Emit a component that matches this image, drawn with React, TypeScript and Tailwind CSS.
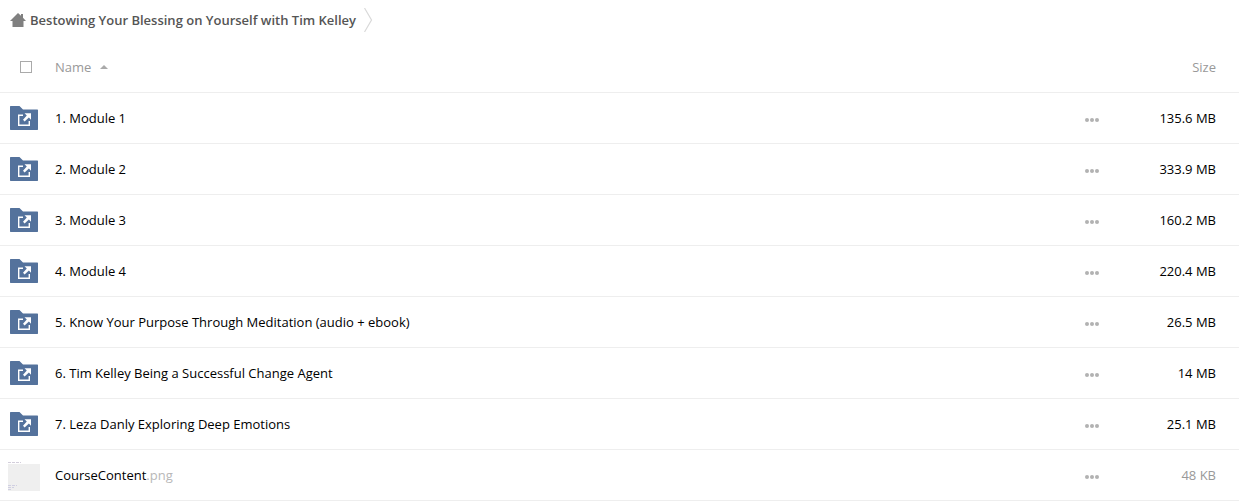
import clsx from "clsx";

type Entry = {
    name: string;
    ext?: string;
    size: string;
    kind: "folder" | "image";
};

const entries: Entry[] = [
    { name: "1. Module 1", size: "135.6 MB", kind: "folder" },
    { name: "2. Module 2", size: "333.9 MB", kind: "folder" },
    { name: "3. Module 3", size: "160.2 MB", kind: "folder" },
    { name: "4. Module 4", size: "220.4 MB", kind: "folder" },
    { name: "5. Know Your Purpose Through Meditation (audio + ebook)", size: "26.5 MB", kind: "folder" },
    { name: "6. Tim Kelley Being a Successful Change Agent", size: "14 MB", kind: "folder" },
    { name: "7. Leza Danly Exploring Deep Emotions", size: "25.1 MB", kind: "folder" },
    { name: "CourseContent", ext: ".png", size: "48 KB", kind: "image" },
];

function HomeIcon() {
    return (
        <svg width="16" height="14" viewBox="0 0 16 14" className="shrink-0" aria-hidden>
            <path d="M8 0 L11 2.8 V1 H13 V4.7 L16 8 H13.5 V14 H2.5 V8 H0 Z" fill="#808080" />
        </svg>
    );
}

function Chevron() {
    return (
        <svg width="9" height="24" viewBox="0 0 9 24" className="shrink-0" aria-hidden>
            <path d="M0.5 0 L7.5 12 L0.5 24" fill="none" stroke="#d9d9d9" strokeWidth="1.2" />
        </svg>
    );
}

function SharedFolderIcon() {
    return (
        <svg width="28" height="24" viewBox="0 0 28 24" aria-hidden>
            <path d="M0.5 0 H9.5 L13 3.5 H27.5 L28 4 V23.5 L27.5 24 H0.5 L0 23.5 V0.5 Z" fill="#54729c" />
            <path d="M13 9.2 H8.7 V19.3 H19.3 V15" fill="none" stroke="#fff" strokeWidth="1.4" />
            <path d="M14.5 7.2 H21 V13.7 L18.9 11.6 L14.6 15.4 L13 13.8 L16.8 9.5 Z" fill="#fff" />
        </svg>
    );
}

function Thumbnail() {
    return (
        <svg width="32" height="32" viewBox="0 0 32 32" aria-hidden>
            <path d="M0 5 H32 V32 H0 Z" fill="#efefef" />
            <path d="M0 3.5 H13" stroke="#d3cedb" strokeDasharray="3 1" />
            <path d="M0 26.5 H9 M0 28.5 H6 M0 30.5 H4" stroke="#d0cfe2" strokeDasharray="3 1" />
        </svg>
    );
}

function Dots() {
    return (
        <svg width="14" height="4" viewBox="0 0 14 4" aria-hidden>
            <circle cx="2" cy="2" r="2" fill="#b2b2b2" />
            <circle cx="7" cy="2" r="2" fill="#b2b2b2" />
            <circle cx="12" cy="2" r="2" fill="#b2b2b2" />
        </svg>
    );
}

function FileRow({ entry }: { entry: Entry }) {
    const isFolder = entry.kind === "folder";
    return (
        <tr className="h-[51px] border-b border-[#eee]">
            <td className={clsx("w-[55px]", isFolder ? "pl-[10px]" : "pl-2")}>
                <div className="flex">{isFolder ? <SharedFolderIcon /> : <Thumbnail />}</div>
            </td>
            <td>
                <a href="#" className="text-black">
                    {entry.name}
                    {entry.ext && <span className="text-[#b8b8b8]">{entry.ext}</span>}
                </a>
            </td>
            <td className="w-8">
                <button type="button" aria-label={`Actions for ${entry.name}`} className="flex pt-1">
                    <Dots />
                </button>
            </td>
            <td className={clsx("w-[122px] pr-[23px] text-right", isFolder ? "text-black" : "text-[#999]")}>
                {entry.size}
            </td>
        </tr>
    );
}

export default function App() {
    return (
        <main className="bg-white font-['Open_Sans',sans-serif] text-[13px] leading-5">
            <nav aria-label="Breadcrumb" className="flex h-[41px] items-center pb-px pl-[10px]">
                <a href="#" className="flex items-center gap-1 font-semibold text-[#555]">
                    <HomeIcon />
                    Bestowing Your Blessing on Yourself with Tim Kelley
                </a>
                <span className="ml-2">
                    <Chevron />
                </span>
            </nav>
            <table className="w-full table-fixed border-collapse">
                <thead>
                    <tr className="h-[51px] border-b border-[#eee] text-[#999]">
                        <th className="w-[55px] pt-0.5 pl-5">
                            <input
                                type="checkbox"
                                aria-label="Select all"
                                className="block size-3 appearance-none border border-[#aaa] bg-white checked:bg-[#54729c]"
                            />
                        </th>
                        <th className="pt-0.5 text-left font-normal">
                            <button type="button" className="flex items-center gap-[9px]">
                                Name
                                <svg width="8" height="4" viewBox="0 0 8 4" aria-hidden>
                                    <path d="M0 4 L4 0 L8 4 Z" fill="#aaa" />
                                </svg>
                            </button>
                        </th>
                        <th className="w-8" aria-label="Actions" />
                        <th className="w-[122px] pt-0.5 pr-[23px] text-right font-normal">Size</th>
                    </tr>
                </thead>
                <tbody>
                    {entries.map((entry) => (
                        <FileRow key={entry.name} entry={entry} />
                    ))}
                </tbody>
            </table>
        </main>
    );
}
